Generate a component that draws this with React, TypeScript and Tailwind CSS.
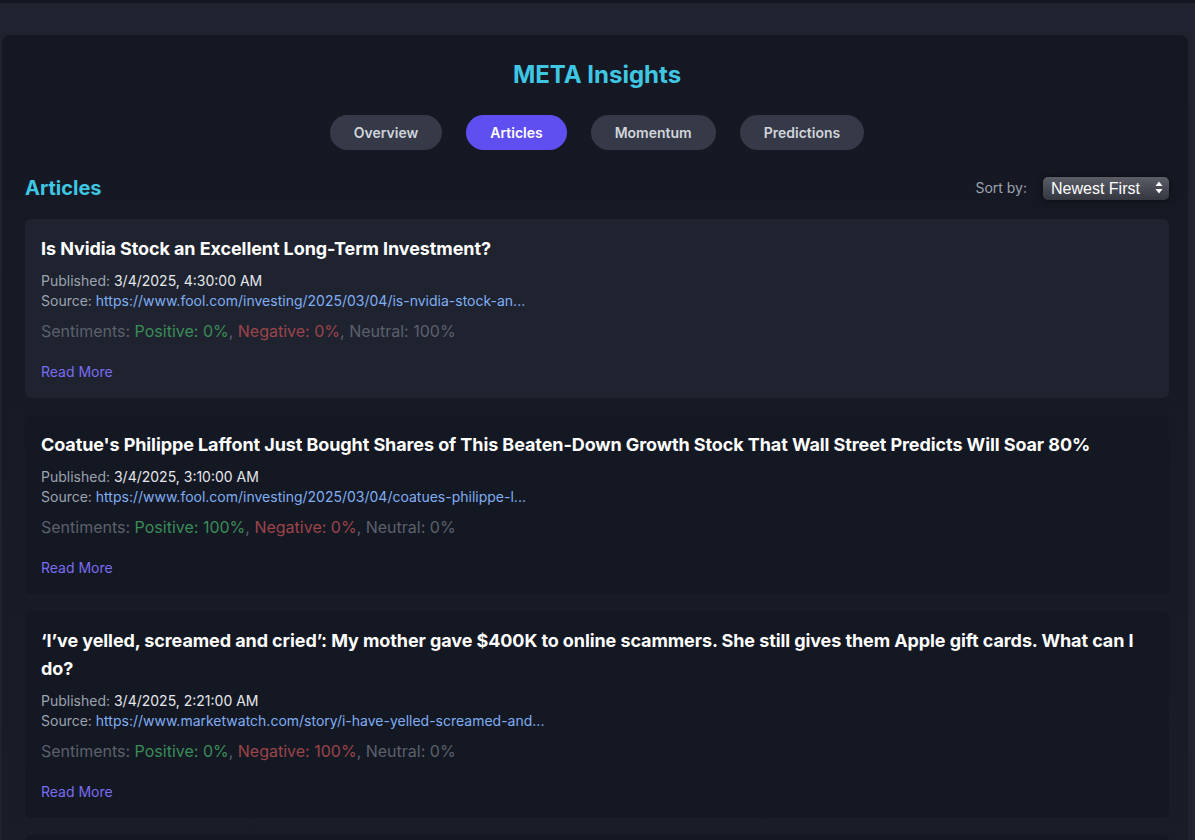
import { useState } from "react";

type Article = {
  id: number;
  title: string;
  published: string;
  source: string;
  positive: number;
  negative: number;
  neutral: number;
};

const articles: Article[] = [
  {
    id: 1,
    title: "Is Nvidia Stock an Excellent Long-Term Investment?",
    published: "3/4/2025, 4:30:00 AM",
    source: "https://www.fool.com/investing/2025/03/04/is-nvidia-stock-an...",
    positive: 0,
    negative: 0,
    neutral: 100,
  },
  {
    id: 2,
    title:
      "Coatue's Philippe Laffont Just Bought Shares of This Beaten-Down Growth Stock That Wall Street Predicts Will Soar 80%",
    published: "3/4/2025, 3:10:00 AM",
    source: "https://www.fool.com/investing/2025/03/04/coatues-philippe-l...",
    positive: 100,
    negative: 0,
    neutral: 0,
  },
  {
    id: 3,
    title:
      "‘I’ve yelled, screamed and cried’: My mother gave $400K to online scammers. She still gives them Apple gift cards. What can I do?",
    published: "3/4/2025, 2:21:00 AM",
    source: "https://www.marketwatch.com/story/i-have-yelled-screamed-and...",
    positive: 0,
    negative: 100,
    neutral: 0,
  },
  {
    id: 4,
    title: "Meta Platforms Stock: Buy, Sell, or Hold?",
    published: "3/4/2025, 1:05:00 AM",
    source: "https://www.fool.com/investing/2025/03/04/meta-platforms-sto...",
    positive: 50,
    negative: 0,
    neutral: 50,
  },
];

const tabs = ["Overview", "Articles", "Momentum", "Predictions"];

const ArticleCard = ({ article, active }: { article: Article; active: boolean }) => (
  <div className={`rounded-md p-4 ${active ? "bg-[#1f2330]" : "bg-[#141823]"}`}>
    <h3 className="text-[18px] leading-7 font-bold tracking-[-0.005em] text-white">{article.title}</h3>
    <p className="mt-2 text-sm leading-5 text-[#9ca3af]">
      Published: <span className="text-[#e5e7eb]">{article.published}</span>
    </p>
    <p className="text-sm leading-5 text-[#9ca3af]">
      Source: <a href="#" className="text-[#80aef3]">{article.source}</a>
    </p>
    <p className="mt-2 text-base leading-6 text-[#5c606c]">
      Sentiments: <span className="text-[#3b8c57]">Positive: {article.positive}%</span>,{" "}
      <span className="text-[#9c4449]">Negative: {article.negative}%</span>, Neutral: {article.neutral}%
    </p>
    <a href="#" className="mt-[19px] block text-sm leading-5 text-[#7a6cf0]">
      Read More
    </a>
  </div>
);

const App = () => {
  const [activeTab, setActiveTab] = useState("Articles");
  const [sort, setSort] = useState("newest");

  return (
    <div className="min-h-screen bg-[#1f2330] font-['Inter','Noto_Sans',sans-serif]">
      <div className="h-[3px] bg-[#141722]" />
      <div className="pt-8">
        <section className="ml-[2px] w-[1186px] rounded-lg bg-linear-to-b from-[#151822] to-[#1b1e2a] pt-6 pb-6 pl-[23px] pr-[19px]">
          <h1 className="text-center text-2xl leading-8 font-bold text-[#3fc6e3]">META Insights</h1>
          <nav className="mt-6 flex justify-center gap-6">
            {tabs.map((tab) => (
              <button
                key={tab}
                onClick={() => setActiveTab(tab)}
                className={`h-[35px] rounded-full px-6 text-sm font-semibold ${
                  activeTab === tab ? "bg-[#5f4ff0] text-white" : "bg-[#353948] text-[#d1d5db]"
                }`}
              >
                {tab}
              </button>
            ))}
          </nav>

          <div className="mt-6 mb-[17px] flex items-center justify-between">
            <h2 className="text-xl leading-7 font-bold text-[#3fc6e3]">Articles</h2>
            <div className="flex items-center gap-4">
              <span className="text-sm text-[#9ca3af]">Sort by:</span>
              <div className="relative">
                <select
                  value={sort}
                  onChange={(e) => setSort(e.target.value)}
                  className="h-[23px] w-[126px] appearance-none rounded-[5px] bg-linear-to-b from-[#5b5e67] to-[#34373f] pl-2 text-[16px] leading-[23px] text-white shadow-[0_0_6px_rgba(0,0,0,0.6)] font-['Liberation_Sans',sans-serif] outline-none"
                >
                  <option value="newest">Newest First</option>
                  <option value="oldest">Oldest First</option>
                </select>
                <svg
                  className="pointer-events-none absolute top-[5px] right-[6px]"
                  width="8"
                  height="13"
                  viewBox="0 0 8 13"
                >
                  <path d="M4 0.5 L7.5 5 H0.5 Z" fill="white" />
                  <path d="M4 12.5 L7.5 8 H0.5 Z" fill="white" />
                </svg>
              </div>
            </div>
          </div>

          <div className="flex flex-col gap-[17px]">
            {articles.map((article, i) => (
              <ArticleCard key={article.id} article={article} active={i === 0} />
            ))}
          </div>
        </section>
      </div>
    </div>
  );
};

export default App;
